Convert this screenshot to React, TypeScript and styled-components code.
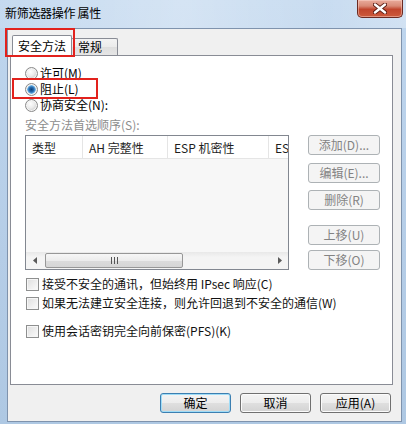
import React from "react";
import styled, { createGlobalStyle, css } from "styled-components";

const GlobalStyle = createGlobalStyle`
  html, body { margin: 0; padding: 0; background: #fff; }
  body {
    font-family: "Noto Sans CJK SC", "Noto Sans", sans-serif;
    font-size: 12px;
    color: #000;
  }
  * { box-sizing: border-box; }
`;

const Window = styled.div`
  width: 406px;
  height: 424px;
  display: flex;
  flex-direction: column;
  background: linear-gradient(180deg, #bfd6ee 0%, #b5cde7 60%, #aec8e3 100%);
  overflow: hidden;
`;

const TitleBar = styled.div`
  height: 28px;
  flex: none;
  display: flex;
  align-items: flex-start;
  padding: 0 3px 0 5px;
  background: linear-gradient(
    90deg,
    rgba(255, 255, 255, 0.1) 0%,
    rgba(255, 255, 255, 0.35) 45%,
    rgba(255, 255, 255, 0.15) 80%,
    rgba(255, 255, 255, 0.3) 100%
  );
`;

const Title = styled.div`
  padding-top: 5px;
  line-height: 16px;
  font-size: 12px;
  letter-spacing: -0.3px;
`;

const CloseButton = styled.div`
  margin-left: auto;
  width: 46px;
  height: 18px;
  border: 1px solid #6b2a22;
  border-top: none;
  border-radius: 0 0 5px 5px;
  background: linear-gradient(180deg, #e9ab9c 0%, #d98a76 35%, #c1452d 55%, #cc5a3c 100%);
  box-shadow: inset 0 0 0 1px rgba(255, 220, 210, 0.45);
  display: flex;
  align-items: center;
  justify-content: center;
`;

const Client = styled.div`
  flex: 1;
  margin: 0 4px 2px 7px;
  border: 1px solid #7f93ad;
  background: #f0f0f0;
  padding: 6px 8px 0 2px;
  display: flex;
  flex-direction: column;
`;

const TabStrip = styled.div`
  display: flex;
  align-items: flex-end;
  height: 21px;
  padding-left: 2px;
  margin-bottom: -1px;
  position: relative;
  z-index: 1;
`;

const Tab = styled.div<{ $active?: boolean }>`
  position: relative;
  display: flex;
  align-items: center;
  border: 1px solid #898c95;
  border-bottom: none;
  border-radius: 2px 2px 0 0;
  line-height: 14px;
  ${(p) =>
    p.$active
      ? css`
          height: 21px;
          padding: 0 5px;
          background: #fff;
        `
      : css`
          height: 17px;
          margin-bottom: 1px;
          margin-left: -1px;
          width: 47px;
          padding: 0 6px;
          background: linear-gradient(180deg, #f3f3f3 0%, #ebebeb 50%, #dedede 51%, #e6e6e6 100%);
        `}
`;

const Highlight = styled.div<{ $l: number; $t: number; $w: number; $h: number }>`
  position: absolute;
  left: ${(p) => p.$l}px;
  top: ${(p) => p.$t}px;
  width: ${(p) => p.$w}px;
  height: ${(p) => p.$h}px;
  border: 2px solid #e2221d;
  pointer-events: none;
  z-index: 5;
`;

const Panel = styled.div`
  height: 330px;
  flex: none;
  border: 1px solid #898c95;
  background: #fff;
  padding: 9px 0 0 14px;
  display: flex;
  flex-direction: column;
`;

const RadioRow = styled.div`
  position: relative;
  display: flex;
  align-items: center;
  height: 16px;
  gap: 2px;
  line-height: 14px;
`;

const RadioDot = styled.span<{ $checked?: boolean }>`
  width: 13px;
  height: 13px;
  border-radius: 50%;
  border: 1px solid #8a8a8a;
  flex: none;
  background: ${(p) =>
    p.$checked
      ? "radial-gradient(circle at 50% 50%, #0b3f78 0, #2a6fb3 2.5px, #6db3e6 4px, #e6e6e6 4.6px, #f6f6f6 100%)"
      : "radial-gradient(circle at 40% 35%, #fdfdfd 0, #ececec 4px, #d9d9d9 6px)"};
  box-shadow: inset 0 0 0 1px #f4f4f4;
`;

const GroupLabel = styled.div`
  margin-top: 4px;
  height: 16px;
  line-height: 16px;
  color: #8d8d8d;
`;

const ListRow = styled.div`
  margin-top: 2px;
  display: flex;
  gap: 19px;
`;

const ListBox = styled.div`
  width: 264px;
  height: 135px;
  border: 1px solid #828790;
  display: flex;
  flex-direction: column;
  overflow: hidden;
  background: #fff;
`;

const HeaderRow = styled.div`
  display: flex;
  height: 23px;
  flex: none;
  border-bottom: 1px solid #e5e5e5;
  background: #fff;
`;

const HeaderCell = styled.div<{ $w: number; $last?: boolean }>`
  width: ${(p) => p.$w}px;
  flex: none;
  padding-left: 6px;
  display: flex;
  align-items: center;
  white-space: nowrap;
  overflow: hidden;
  border-right: ${(p) => (p.$last ? "none" : "1px solid #e5e5e5")};
  color: #1e1e1e;
`;

const ListBody = styled.div`
  flex: 1;
  background: #f7f7f7;
`;

const HScroll = styled.div`
  height: 17px;
  flex: none;
  display: flex;
  align-items: center;
  background: linear-gradient(180deg, #e8e8e8 0%, #f4f4f4 30%, #f4f4f4 100%);
`;

const ScrollArrow = styled.div`
  width: 17px;
  height: 17px;
  flex: none;
  display: flex;
  align-items: center;
  justify-content: center;
`;

const ScrollThumb = styled.div`
  width: 138px;
  height: 15px;
  margin-left: 2px;
  border: 1px solid #979797;
  border-radius: 2px;
  background: linear-gradient(180deg, #f6f6f6 0%, #ececec 50%, #dcdcdc 51%, #d6d6d6 100%);
  display: flex;
  align-items: center;
  justify-content: center;
`;

const ScrollTrack = styled.div`
  flex: 1;
`;

const SideButtons = styled.div`
  display: flex;
  flex-direction: column;
`;

const DisabledButton = styled.div<{ $mt: number }>`
  width: 72px;
  height: 20px;
  margin-top: ${(p) => p.$mt}px;
  border: 1px solid #adb2b5;
  border-radius: 3px;
  background: #f4f4f4;
  color: #838383;
  display: flex;
  align-items: center;
  justify-content: center;
  line-height: 14px;
  white-space: nowrap;
`;

const CheckRow = styled.div<{ $mt: number }>`
  margin-top: ${(p) => p.$mt}px;
  height: 16px;
  display: flex;
  align-items: center;
  gap: 3px;
  padding-left: 1px;
  line-height: 14px;
  white-space: nowrap;
  color: #111;
`;

const CheckBox = styled.span`
  width: 13px;
  height: 13px;
  flex: none;
  border: 1px solid #8e8f8f;
  background: linear-gradient(135deg, #dedede 0%, #f0f0f0 60%, #fbfbfb 100%);
  box-shadow: inset 0 0 0 1px #f6f6f6;
`;

const ButtonRow = styled.div`
  margin-top: 8px;
  display: flex;
  justify-content: flex-end;
  gap: 9px;
  padding-right: 2px;
`;

const DialogButton = styled.div<{ $default?: boolean }>`
  width: 71px;
  height: 20px;
  border-radius: 3px;
  display: flex;
  align-items: center;
  justify-content: center;
  line-height: 14px;
  background: linear-gradient(180deg, #f4f4f4 0%, #ececec 50%, #dfdfdf 51%, #d3d3d3 100%);
  ${(p) =>
    p.$default
      ? css`
          border: 1px solid #3c7fb1;
          box-shadow: inset 0 0 0 1px #9fdcf7;
        `
      : css`
          border: 1px solid #707070;
          box-shadow: inset 0 0 0 1px #fbfbfb;
        `}
`;

const CloseIcon = () => (
  <svg width="14" height="11" viewBox="0 0 14 11">
    <path d="M2 1.5 L12 9.5 M12 1.5 L2 9.5" stroke="#5a1b12" strokeWidth="4.2" strokeLinecap="round" />
    <path d="M2 1.5 L12 9.5 M12 1.5 L2 9.5" stroke="#ffffff" strokeWidth="2.4" strokeLinecap="round" />
  </svg>
);

const LeftTri = () => (
  <svg width="4" height="7" viewBox="0 0 4 7">
    <path d="M4 0 L0 3.5 L4 7 Z" fill="#5a5a5a" />
  </svg>
);

const RightTri = () => (
  <svg width="4" height="7" viewBox="0 0 4 7">
    <path d="M0 0 L4 3.5 L0 7 Z" fill="#5a5a5a" />
  </svg>
);

const Grip = () => (
  <svg width="7" height="7" viewBox="0 0 7 7">
    <path d="M0.5 0 V7 M3.5 0 V7 M6.5 0 V7" stroke="#555" strokeWidth="1" />
  </svg>
);

export default function App() {
  return (
    <>
      <GlobalStyle />
      <Window>
        <TitleBar>
          <Title>新筛选器操作 属性</Title>
          <CloseButton>
            <CloseIcon />
          </CloseButton>
        </TitleBar>
        <Client>
          <TabStrip>
            <Tab $active>
              安全方法
              <Highlight $l={-8} $t={-8} $w={70} $h={29} />
            </Tab>
            <Tab>常规</Tab>
          </TabStrip>
          <Panel>
            <RadioRow>
              <RadioDot />
              许可(M)
            </RadioRow>
            <RadioRow>
              <RadioDot $checked />
              阻止(L)
              <Highlight $l={-13} $t={-3} $w={86} $h={21} />
            </RadioRow>
            <RadioRow>
              <RadioDot />
              协商安全(N):
            </RadioRow>
            <GroupLabel>安全方法首选顺序(S):</GroupLabel>
            <ListRow>
              <ListBox>
                <HeaderRow>
                  <HeaderCell $w={57}>类型</HeaderCell>
                  <HeaderCell $w={85}>AH 完整性</HeaderCell>
                  <HeaderCell $w={101}>ESP 机密性</HeaderCell>
                  <HeaderCell $w={40} $last>
                    ESP
                  </HeaderCell>
                </HeaderRow>
                <ListBody />
                <HScroll>
                  <ScrollArrow>
                    <LeftTri />
                  </ScrollArrow>
                  <ScrollThumb>
                    <Grip />
                  </ScrollThumb>
                  <ScrollTrack />
                  <ScrollArrow>
                    <RightTri />
                  </ScrollArrow>
                </HScroll>
              </ListBox>
              <SideButtons>
                <DisabledButton $mt={0}>添加(D)...</DisabledButton>
                <DisabledButton $mt={8}>编辑(E)...</DisabledButton>
                <DisabledButton $mt={7}>删除(R)</DisabledButton>
                <DisabledButton $mt={15}>上移(U)</DisabledButton>
                <DisabledButton $mt={5}>下移(O)</DisabledButton>
              </SideButtons>
            </ListRow>
            <CheckRow $mt={6}>
              <CheckBox />
              接受不安全的通讯，但始终用 IPsec 响应(C)
            </CheckRow>
            <CheckRow $mt={3}>
              <CheckBox />
              如果无法建立安全连接，则允许回退到不安全的通信(W)
            </CheckRow>
            <CheckRow $mt={12}>
              <CheckBox />
              使用会话密钥完全向前保密(PFS)(K)
            </CheckRow>
          </Panel>
          <ButtonRow>
            <DialogButton $default>确定</DialogButton>
            <DialogButton>取消</DialogButton>
            <DialogButton>应用(A)</DialogButton>
          </ButtonRow>
        </Client>
      </Window>
    </>
  );
}
